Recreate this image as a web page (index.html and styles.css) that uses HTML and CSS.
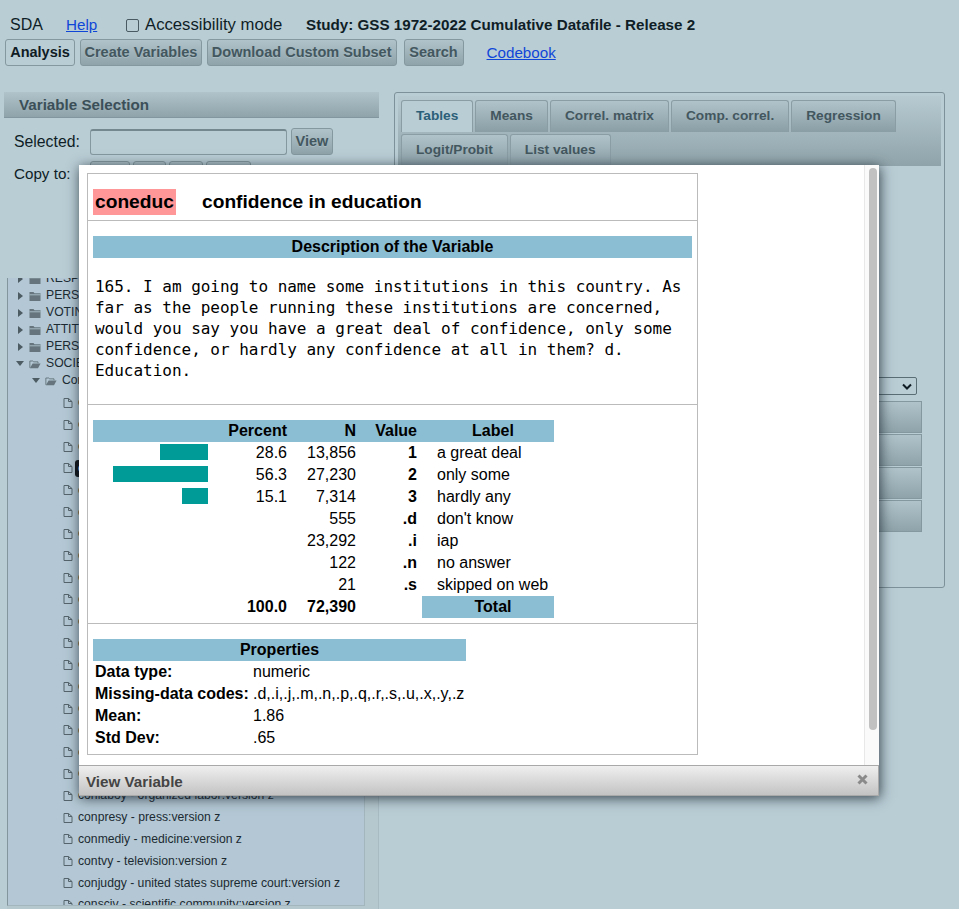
FILE: index.html
```html
<!DOCTYPE html>
<html lang="en">
<head>
<meta charset="utf-8">
<title>SDA</title>
<link rel="stylesheet" href="styles.css">
</head>
<body>
<svg class="defs" width="0" height="0">
  <symbol id="folder" viewBox="0 0 12 12"><path d="M.5 2h4l1 1.300H11.500V11H.5z" fill="#66757d"/><path d="M.5 4.800h11" stroke="#b5c9d5" stroke-width=".8"/></symbol>
  <symbol id="open" viewBox="0 0 14 12"><path d="M1 10.500V2.500h3.500l1 1H10.500v1.500" fill="none" stroke="#5e6d75" stroke-width="1"/><path d="M4.200 5.500h9.300l-3 5.500H1z" fill="#66757d"/></symbol>
  <symbol id="file" viewBox="0 0 10 12"><path d="M1 1.500h4.500L9 4.500V10.500H1zM5.500 1.500V4.500H9" fill="none" stroke="#55646c" stroke-width="1" stroke-linejoin="round"/></symbol>
</svg>

<header class="top">
  <span class="sda">SDA</span>
  <a class="link help" href="#">Help</a>
  <label class="access"><input class="check" type="checkbox">Accessibility mode</label>
  <strong class="study">Study: GSS 1972-2022 Cumulative Datafile - Release 2</strong>
</header>

<nav class="nav">
  <button class="btn btn-current">Analysis</button>
  <button class="btn">Create Variables</button>
  <button class="btn">Download Custom Subset</button>
  <button class="btn btn-search">Search</button>
  <a class="link codebook" href="#">Codebook</a>
</nav>

<main class="main">
  <section class="left">
    <h2 class="panel-title">Variable Selection</h2>
    <div class="sel-row">
      <span class="sel-label">Selected:</span>
      <input class="sel-input" type="text">
      <button class="btn btn-view">View</button>
    </div>
    <div class="copy-row">
      <span class="copy-label">Copy to:</span>
      <button class="btn btn-copy b1"></button>
      <button class="btn btn-copy b2"></button>
      <button class="btn btn-copy b3"></button>
      <button class="btn btn-copy b4"></button>
    </div>
    <div class="tree-wrap">
      <div class="tree">
        <div class="node node-cut"><span class="tri"></span><svg class="ic-folder"><use href="#folder"/></svg>RESPONDENT</div>
        <div class="node"><span class="tri"></span><svg class="ic-folder"><use href="#folder"/></svg>PERSONAL</div>
        <div class="node"><span class="tri"></span><svg class="ic-folder"><use href="#folder"/></svg>VOTING</div>
        <div class="node"><span class="tri"></span><svg class="ic-folder"><use href="#folder"/></svg>ATTITUDES</div>
        <div class="node"><span class="tri"></span><svg class="ic-folder"><use href="#folder"/></svg>PERSONAL</div>
        <div class="node"><span class="tri tri-open"></span><svg class="ic-folder"><use href="#open"/></svg>SOCIETY</div>
        <div class="node node-sub"><span class="tri tri-open"></span><svg class="ic-folder"><use href="#open"/></svg>Confidence</div>
        <div class="leaf"><svg class="ic-file"><use href="#file"/></svg><span>confinan - banks</span></div>
        <div class="leaf"><svg class="ic-file"><use href="#file"/></svg><span>conbus - major companies</span></div>
        <div class="leaf"><svg class="ic-file"><use href="#file"/></svg><span>conclerg - organized religion</span></div>
        <div class="leaf"><svg class="ic-file"><use href="#file"/></svg><span class="leaf-on">coneduc - education</span></div>
        <div class="leaf"><svg class="ic-file"><use href="#file"/></svg><span>confed - executive branch</span></div>
        <div class="leaf"><svg class="ic-file"><use href="#file"/></svg><span>conlabor - organized labor</span></div>
        <div class="leaf"><svg class="ic-file"><use href="#file"/></svg><span>conpress - press</span></div>
        <div class="leaf"><svg class="ic-file"><use href="#file"/></svg><span>conmedic - medicine</span></div>
        <div class="leaf"><svg class="ic-file"><use href="#file"/></svg><span>contv - television</span></div>
        <div class="leaf"><svg class="ic-file"><use href="#file"/></svg><span>conjudge - supreme court</span></div>
        <div class="leaf"><svg class="ic-file"><use href="#file"/></svg><span>consci - scientific community</span></div>
        <div class="leaf"><svg class="ic-file"><use href="#file"/></svg><span>conlegis - congress</span></div>
        <div class="leaf"><svg class="ic-file"><use href="#file"/></svg><span>conarmy - military</span></div>
        <div class="leaf"><svg class="ic-file"><use href="#file"/></svg><span>confiny - banks:version z</span></div>
        <div class="leaf"><svg class="ic-file"><use href="#file"/></svg><span>conbusy - major companies:version z</span></div>
        <div class="leaf"><svg class="ic-file"><use href="#file"/></svg><span>conclery - organized religion:version z</span></div>
        <div class="leaf"><svg class="ic-file"><use href="#file"/></svg><span>coneducy - education:version z</span></div>
        <div class="leaf"><svg class="ic-file"><use href="#file"/></svg><span>confedy - executive branch:version z</span></div>
        <div class="leaf"><svg class="ic-file"><use href="#file"/></svg><span>conlaboy - organized labor:version z</span></div>
        <div class="leaf"><svg class="ic-file"><use href="#file"/></svg><span>conpresy - press:version z</span></div>
        <div class="leaf"><svg class="ic-file"><use href="#file"/></svg><span>conmediy - medicine:version z</span></div>
        <div class="leaf"><svg class="ic-file"><use href="#file"/></svg><span>contvy - television:version z</span></div>
        <div class="leaf"><svg class="ic-file"><use href="#file"/></svg><span>conjudgy - united states supreme court:version z</span></div>
        <div class="leaf"><svg class="ic-file"><use href="#file"/></svg><span>consciv - scientific community:version z</span></div>
      </div>
    </div>
  </section>

  <section class="right">
    <div class="tabs">
      <a class="tab tab-on">Tables</a>
      <a class="tab">Means</a>
      <a class="tab">Correl. matrix</a>
      <a class="tab">Comp. correl.</a>
      <a class="tab">Regression</a>
      <a class="tab">Logit/Probit</a>
      <a class="tab">List values</a>
    </div>
    <div class="form">
      <div class="select-box"><svg class="chev" width="10" height="7" viewBox="0 0 10 7"><path d="M1 1.500l4 4 4-4" fill="none" stroke="#101c24" stroke-width="2"/></svg></div>
      <div class="run-stack">
        <div class="run"></div>
        <div class="run"></div>
        <div class="run"></div>
        <div class="run"></div>
      </div>
    </div>
  </section>
</main>

<div class="modal">
  <div class="modal-body">
    <div class="modal-content">
      <div class="box">
        <div class="var-head">
          <span class="var-name">coneduc</span>
          <span class="var-title">confidence in education</span>
        </div>
        <div class="sec sec-desc">
          <div class="bar-title">Description of the Variable</div>
          <p class="question">165. I am going to name some institutions in this country. As
far as the people running these institutions are concerned,
would you say you have a great deal of confidence, only some
confidence, or hardly any confidence at all in them? d.
Education.</p>
        </div>
        <div class="sec sec-freq">
          <table class="freq">
            <thead>
              <tr><th class="c-bar"></th><th class="c-pct">Percent</th><th class="c-n">N</th><th class="c-val">Value</th><th class="c-lab c-center">Label</th></tr>
            </thead>
            <tbody>
              <tr><td class="c-bar"><div class="hbar" style="width:48px"></div></td><td class="c-pct">28.6</td><td class="c-n">13,856</td><td class="c-val">1</td><td class="c-lab">a great deal</td></tr>
              <tr><td class="c-bar"><div class="hbar" style="width:95px"></div></td><td class="c-pct">56.3</td><td class="c-n">27,230</td><td class="c-val">2</td><td class="c-lab">only some</td></tr>
              <tr><td class="c-bar"><div class="hbar" style="width:26px"></div></td><td class="c-pct">15.1</td><td class="c-n">7,314</td><td class="c-val">3</td><td class="c-lab">hardly any</td></tr>
              <tr><td class="c-bar"></td><td class="c-pct"></td><td class="c-n">555</td><td class="c-val">.d</td><td class="c-lab">don't know</td></tr>
              <tr><td class="c-bar"></td><td class="c-pct"></td><td class="c-n">23,292</td><td class="c-val">.i</td><td class="c-lab">iap</td></tr>
              <tr><td class="c-bar"></td><td class="c-pct"></td><td class="c-n">122</td><td class="c-val">.n</td><td class="c-lab">no answer</td></tr>
              <tr><td class="c-bar"></td><td class="c-pct"></td><td class="c-n">21</td><td class="c-val">.s</td><td class="c-lab">skipped on web</td></tr>
              <tr class="total"><td class="c-bar"></td><td class="c-pct">100.0</td><td class="c-n">72,390</td><td class="c-val"></td><th class="c-lab c-center">Total</th></tr>
            </tbody>
          </table>
        </div>
        <div class="sec sec-props">
          <table class="props">
            <colgroup><col class="col-key"><col class="col-value"></colgroup>
            <thead><tr><th colspan="2">Properties</th></tr></thead>
            <tbody>
              <tr><th>Data type:</th><td>numeric</td></tr>
              <tr><th>Missing-data codes:</th><td>.d,.i,.j,.m,.n,.p,.q,.r,.s,.u,.x,.y,.z</td></tr>
              <tr><th>Mean:</th><td>1.86</td></tr>
              <tr><th>Std Dev:</th><td>.65</td></tr>
            </tbody>
          </table>
        </div>
      </div>
    </div>
    <div class="scroll"><div class="thumb"></div></div>
  </div>
  <div class="modal-foot">
    <span class="foot-title">View Variable</span>
    <svg class="close" width="11" height="11" viewBox="0 0 11 11"><path d="M1.500 1.500l8 8M9.500 1.500l-8 8" stroke="#8a8a8a" stroke-width="3"/></svg>
  </div>
</div>
</body>
</html>
```

FILE: styles.css
```css
* { box-sizing: border-box; }
html, body { margin: 0; height: 100%; }
body {
  position: relative;
  height: 909px;
  overflow: hidden;
  background: #b9cdd5;
  color: #0f1e26;
  font: 16px/18px "Liberation Sans", Arial, sans-serif;
}
.defs { position: absolute; }
.link { color: #1046d8; text-decoration: underline; font-size: 15.2px; }

.top { display: flex; align-items: center; height: 18px; margin-top: 16px; padding-left: 10px; }
.sda { width: 56px; }
.help { width: 60px; }
.access { display: flex; align-items: center; width: 180px; font-size: 16.7px; }
.check { width: 13px; height: 13px; margin: 0 6px 0 0; appearance: none; background: #b9cdd5; border: 1px solid #4a5a62; border-radius: 2px; }
.study { font-weight: bold; font-size: 15.2px; }

.nav { display: flex; align-items: center; gap: 4.500px; height: 27px; margin-top: 5px; padding-left: 5px; }
.btn {
  height: 27px;
  padding: 0 4px 2px;
  border: 1px solid #84989f;
  border-radius: 3px;
  background: linear-gradient(#b0c3ca, #8fa3aa);
  color: #43575f;
  font: bold 14.5px/16px "Liberation Sans", Arial, sans-serif;
  text-shadow: 0 1px 0 #a9bcc3;
}
.btn-current { width: 70px; background: #b9cdd5; color: #101c24; text-shadow: none; padding: 0 0 2px; }
.btn-search { margin-left: 2.500px; width: 60px; }
.codebook { margin-left: 18.500px; }

.main { display: flex; align-items: flex-start; margin-top: 26px; padding-left: 4px; }
.left { width: 375px; flex: none; }
.panel-title {
  height: 26px;
  margin: 0;
  padding-left: 15px;
  background: linear-gradient(#b0c3ca, #8fa3aa);
  border-bottom: 1px solid #8296a0;
  color: #3b4f58;
  font: bold 15.2px/25px "Liberation Sans", Arial, sans-serif;
}
.sel-row { display: flex; align-items: center; gap: 4px; height: 27px; margin-top: 10px; padding-left: 10px; font-size: 15.800px; }
.sel-label { width: 72px; }
.sel-input { width: 197px; height: 26px; margin-left: 0; background: #b9cdd5; border: 1px solid #84989f; border-top: 2px solid #74888f; border-radius: 3px; }
.btn-view { width: 42px; padding: 0 0 2px; }
.copy-row { display: flex; align-items: flex-start; gap: 3px; height: 30px; margin-top: 6px; padding-left: 10px; font-size: 15.200px; }
.copy-label { width: 73px; margin-top: 4px; }
.btn-copy { height: 27px; padding: 0; }
.b1 { width: 40px; }
.b2 { width: 33px; }
.b3 { width: 34px; }
.b4 { width: 45px; }

.tree-wrap {
  height: 631px;
  margin-top: 87px;
  padding-left: 3px;
  border-right: 1px solid #a8bbc3;
  background: linear-gradient(90deg, #b9cdd5 3px, #b5c8ce 3px);
}
.tree {
  width: 358px;
  height: 628px;
  overflow: hidden;
  background: #b3c8d4;
  border-left: 1px solid #83969e;
  border-right: 1px solid #a3b6be;
  border-bottom: 1px solid #a3b6be;
  font: 12.200px/17px "Liberation Sans", Arial, sans-serif;
  color: #1c2a32;
}
.node { display: flex; align-items: center; height: 17px; padding-left: 10px; white-space: nowrap; }
.node-cut { margin-top: -8px; }
.node-sub { padding-left: 26px; }
.tri { width: 0; height: 0; margin-right: 6px; border-left: 5px solid #4d5b63; border-top: 4px solid transparent; border-bottom: 4px solid transparent; }
.tri-open { margin-left: -2px; margin-right: 5px; border-left: 4px solid transparent; border-right: 4px solid transparent; border-top: 5px solid #4d5b63; border-bottom: 0; }
.ic-folder { width: 12px; height: 12px; margin-right: 5px; flex: none; }
.leaf { display: flex; align-items: center; height: 21.830px; padding-left: 55px; white-space: nowrap; }
.leaf:nth-child(8) { margin-top: 3px; }
.ic-file { width: 10px; height: 12px; margin-right: 5px; flex: none; }
.leaf-on { margin-left: -3px; padding: 0 3px; background: #101418; color: #fff; border-radius: 3px; }

.right { width: 551px; height: 496px; margin-left: 15px; flex: none; padding: 3px; border: 1px solid #7c9199; border-radius: 3px; }
.tabs {
  display: flex;
  flex-wrap: wrap;
  gap: 1px 2px;
  height: 70px;
  padding: 4px 3px 0;
  background: linear-gradient(#b7cad1, #8fa3aa);
}
.tab {
  height: 32px;
  padding: 0 14px;
  border: 1px solid #8a9da5;
  border-bottom: 0;
  border-radius: 3px 3px 0 0;
  background: linear-gradient(#b0c3ca, #8a9ea6);
  color: #43575f;
  font: bold 13.700px/30px "Liberation Sans", Arial, sans-serif;
}
.tab-on { background: #b9cdd5; color: #2c5f78; }
.form { display: flex; flex-direction: column; align-items: flex-end; padding-right: 19px; }
.select-box { display: flex; align-items: center; justify-content: flex-end; width: 200px; height: 18px; margin: 211px 5px 0 0; padding-right: 4px; border: 1px solid #5a6e76; border-radius: 2px; }
.run-stack { display: flex; flex-direction: column; gap: 1px; margin-top: 6px; }
.run { width: 140px; height: 32px; border: 1px solid #84989f; background: linear-gradient(#b0c3ca, #8fa3aa); }

.modal {
  position: absolute;
  left: 79px;
  top: 165px;
  width: 800px;
  height: 631px;
  display: flex;
  flex-direction: column;
  background: #fff;
  color: #000;
  box-shadow: 1px 2px 12px rgba(20, 30, 40, .8);
}
.modal-body { flex: 1; display: flex; min-height: 0; }
.modal-content { flex: 1; padding: 8px; }
.scroll { width: 15px; padding: 3px 3px 0 4px; background: #fafafa; border-left: 1px solid #e8e8e8; }
.thumb { width: 8px; height: 562px; border-radius: 4px; background: #c1c1c1; }
.modal-foot {
  display: flex;
  align-items: center;
  justify-content: space-between;
  height: 31px;
  padding: 2px 10px 0 7px;
  border-top: 1px solid #a9a9a9;
  border-right: 1px solid #a9a9a9;
  border-bottom: 1px solid #a9a9a9;
  background: linear-gradient(#efefef, #c3c3c3);
}
.foot-title { color: #444; font-weight: bold; font-size: 15.200px; }
.close { margin-top: -5px; }

.box { width: 611px; height: 582px; border: 1px solid #bbb; }
.var-head { display: flex; align-items: flex-start; height: 47px; padding: 15px 0 0 5px; border-bottom: 1px solid #bbb; }
.var-name { width: 83px; height: 26px; margin-right: 26px; padding-left: 2px; background: #ff9698; font: bold 19.200px/26px "Liberation Sans", Arial, sans-serif; }
.var-title { font: bold 19.200px/26px "Liberation Sans", Arial, sans-serif; }
.sec { padding: 15px 5px 0; border-bottom: 1px solid #bbb; }
.sec-desc { height: 184px; }
.sec-freq { height: 219px; }
.sec-props { border-bottom: 0; }
.bar-title { height: 22px; background: #8bbdd3; text-align: center; font: bold 16px/22px "Liberation Sans", Arial, sans-serif; }
.question { margin: 18px 0 0 2px; white-space: pre; letter-spacing: -.02px; font: 16px/21px "DejaVu Sans Mono", monospace; }

table { border-collapse: collapse; table-layout: fixed; }
.freq { width: 461px; }
.freq th, .freq td, .props th, .props td { height: 22px; padding: 0; line-height: 22px; font-size: 16px; }
.freq thead th { background: #8bbdd3; }
.c-bar { width: 121px; padding-right: 6px !important; }
.c-pct { width: 78px; padding-right: 5px !important; text-align: right; }
.c-n { width: 69px; padding-right: 5px !important; text-align: right; }
.c-val { width: 61px; padding-right: 5px !important; text-align: right; font-weight: bold; }
.c-lab { width: 132px; padding-left: 15px !important; padding-right: 5px !important; text-align: left; }
.c-center { text-align: center; }
.total th { background: #8bbdd3; }
.total td { font-weight: bold; }
.hbar { height: 16px; margin: -2px 0 0 auto; background: #009b96; }
.props { width: 373px; }
.col-key { width: 158px; }
.col-value { width: 215px; }
.props thead th { background: #8bbdd3; text-align: center; }
.props tbody th { padding-left: 2px; text-align: left; }
.props tbody td { padding-left: 2px; white-space: nowrap; }
```
